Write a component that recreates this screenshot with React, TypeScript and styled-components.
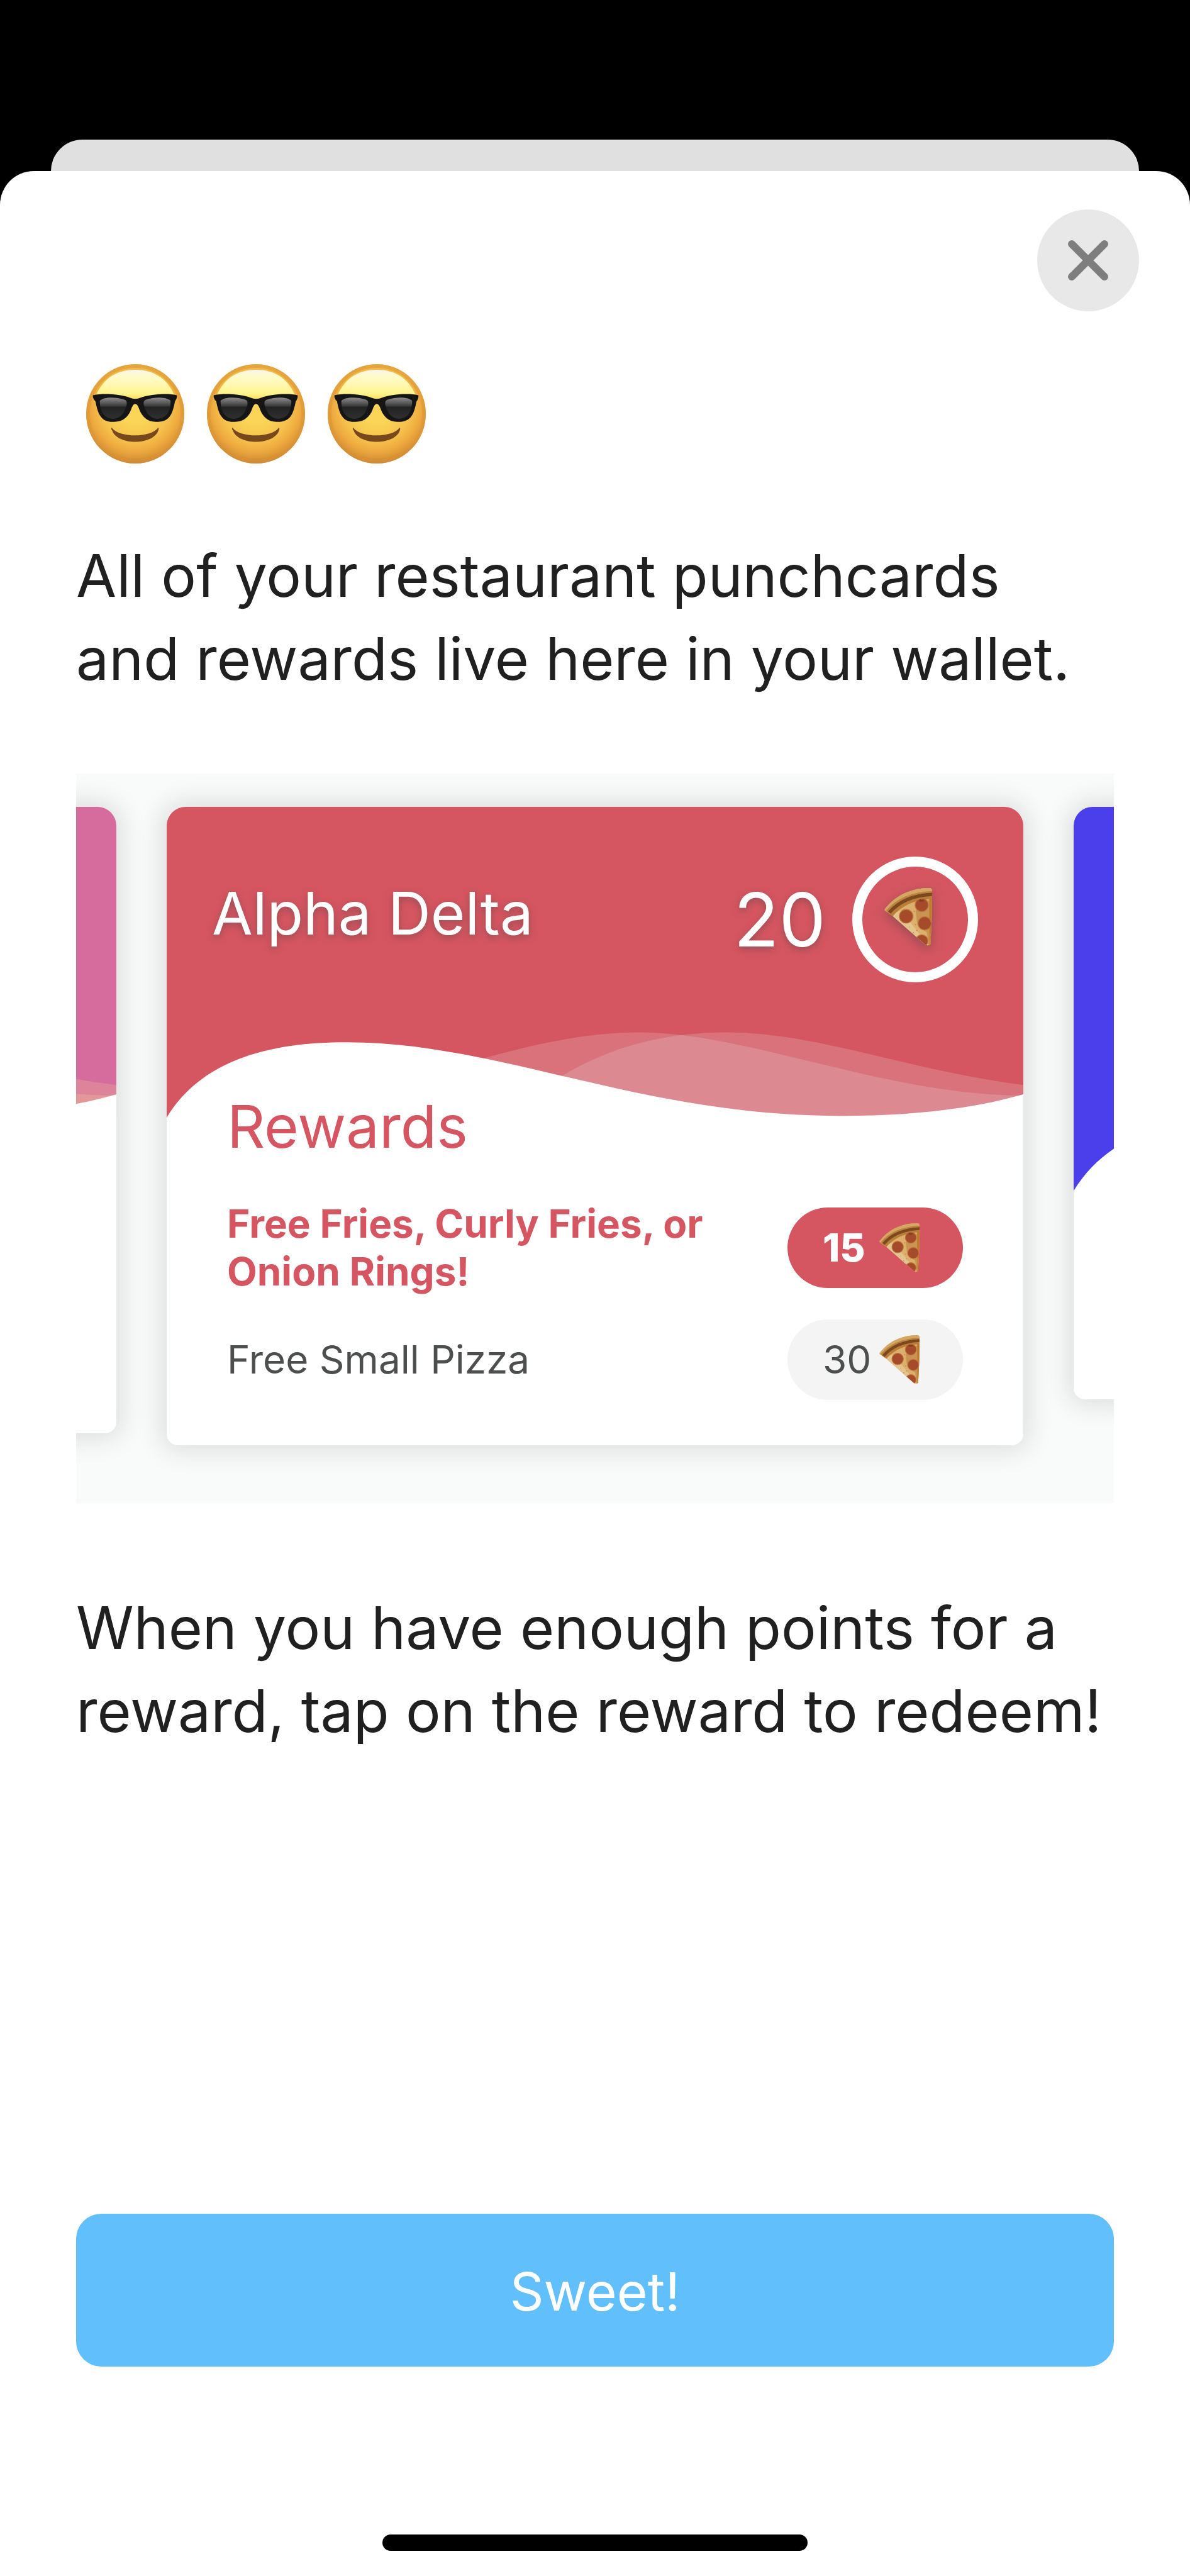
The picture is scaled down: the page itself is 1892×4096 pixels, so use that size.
import React, { useId } from "react";
import styled, { createGlobalStyle } from "styled-components";

const GlobalStyle = createGlobalStyle`
  *, *::before, *::after { box-sizing: border-box; }
  body {
    margin: 0;
    background: #000;
    font-family: Inter, "Liberation Sans", sans-serif;
    color: #202020;
  }
  p, h1, h2, ul { margin: 0; padding: 0; font-weight: 400; }
`;

const Screen = styled.div`
  display: flex;
  flex-direction: column;
  min-height: 100vh;
  padding-top: 222px;
  background: #000;
`;

const SheetBehind = styled.div`
  height: 50px;
  margin: 0 81px;
  border-radius: 50px 50px 0 0;
  background: #e0e0e0;
`;

const Sheet = styled.main`
  flex: 1;
  display: flex;
  flex-direction: column;
  padding-bottom: 40px;
  border-radius: 54px 54px 0 0;
  background: #fff;
`;

const TopBar = styled.div`
  display: flex;
  justify-content: flex-end;
  padding: 61px 81px 0;
`;

const CloseButton = styled.button`
  display: grid;
  place-items: center;
  width: 162px;
  height: 162px;
  padding: 0;
  border: 0;
  border-radius: 50%;
  background: #e8e8e8;
  color: #7e7e7e;
`;

const Content = styled.div`
  flex: 1;
  display: flex;
  flex-direction: column;
  padding: 84px 121px 0;
`;

const Faces = styled.div`
  display: flex;
  gap: 36px;
  padding-left: 16px;
`;

const Message = styled.p<{ $top: number }>`
  margin-top: ${(p) => p.$top}px;
  font-size: 93px;
  line-height: 132px;
`;

const Carousel = styled.section`
  display: flex;
  justify-content: center;
  align-items: flex-start;
  gap: 80px;
  margin-top: 117px;
  padding: 53px 0 92px;
  overflow: hidden;
  background: #f9fbfa;
`;

const Card = styled.article<{ $minHeight?: number }>`
  position: relative;
  flex: 0 0 calc(100% - 288px);
  min-height: ${(p) => p.$minHeight ?? 0}px;
  overflow: hidden;
  border-radius: 30px 30px 18px 18px;
  background: #fff;
  box-shadow: 0 0 40px 10px rgba(0, 0, 0, 0.11);
`;

const CardArt = styled.svg`
  position: absolute;
  top: 0;
  left: 0;
  display: block;
  width: 100%;
`;

const CardBody = styled.div`
  position: relative;
`;

const CardHeader = styled.header`
  display: flex;
  align-items: center;
  justify-content: space-between;
  padding: 79px 72px 174px;
  color: #fff;
  text-shadow: 0 4px 12px rgba(60, 60, 60, 0.4);
`;

const CardTitle = styled.h1`
  padding-bottom: 20px;
  font-size: 94px;
  line-height: 110px;
`;

const Points = styled.div`
  display: flex;
  align-items: center;
  gap: 42px;
  font-size: 118px;
  line-height: 140px;
`;

const Ring = styled.span`
  display: grid;
  place-items: center;
  width: 200px;
  height: 200px;
  padding: 0 22px 8px 0;
  border: 16px solid #fff;
  border-radius: 50%;
  svg { filter: drop-shadow(0 6px 9px rgba(60, 60, 60, 0.4)); }
`;

const Rewards = styled.div`
  padding: 0 96px 72px;
`;

const RewardsTitle = styled.h2`
  color: #d55661;
  font-size: 94px;
  line-height: 110px;
`;

const RewardList = styled.ul`
  display: grid;
  gap: 38px;
  margin-top: 62px;
  list-style: none;
`;

const Reward = styled.li<{ $ready?: boolean }>`
  display: flex;
  align-items: center;
  justify-content: space-between;
  color: ${(p) => (p.$ready ? "#d55661" : "#4d4f4f")};
  font-size: 62px;
  font-weight: ${(p) => (p.$ready ? 650 : 400)};
  line-height: 76px;
`;

const RewardName = styled.span`
  max-width: 800px;
`;

const Cost = styled.button<{ $ready?: boolean }>`
  display: flex;
  align-items: center;
  width: 279px;
  height: 128px;
  padding: 0 0 0 56px;
  border: 0;
  border-radius: 64px;
  background: ${(p) => (p.$ready ? "#d55661" : "#f4f4f4")};
  color: ${(p) => (p.$ready ? "#fff" : "#4d4f4f")};
  font: inherit;
  font-weight: ${(p) => (p.$ready ? 800 : 400)};
`;

const CostNumber = styled.span`
  width: 90px;
  text-align: left;
`;

const PrimaryButton = styled.button`
  flex: none;
  height: 243px;
  margin-top: auto;
  padding: 4px 0 0;
  border: 0;
  border-radius: 40px;
  background: #61bffb;
  color: #fff;
  font-family: inherit;
  font-size: 84px;
  line-height: 100px;
`;

const HomeIndicator = styled.div`
  flex: none;
  align-self: center;
  width: 676px;
  height: 26px;
  margin-top: 267px;
  border-radius: 13px;
  background: #000;
`;

function CloseIcon() {
  return (
    <svg width="64" height="64" viewBox="0 0 64 64" aria-hidden="true">
      <path d="M6 6L58 58M58 6L6 58" stroke="currentColor" strokeWidth="12" strokeLinecap="round" />
    </svg>
  );
}

function CoolFace() {
  const id = useId();
  return (
    <svg width="156" height="158" viewBox="0 0 158 160" aria-hidden="true">
      <defs>
        <radialGradient id={id + "f"} cx="0.5" cy="0.42" r="0.58">
          <stop offset="0.3" stopColor="#fad557" />
          <stop offset="0.6" stopColor="#f6c24c" />
          <stop offset="0.78" stopColor="#efab40" />
          <stop offset="0.9" stopColor="#dd9837" />
          <stop offset="1" stopColor="#c07a33" />
        </radialGradient>
        <linearGradient id={id + "h"} x1="0" y1="0" x2="0" y2="1">
          <stop offset="0" stopColor="#f4f4f6" />
          <stop offset="0.16" stopColor="#fffbd0" />
          <stop offset="0.5" stopColor="#fff8b0" />
          <stop offset="0.8" stopColor="#fff38a" />
          <stop offset="1" stopColor="#fbd75a" />
        </linearGradient>
        <linearGradient id={id + "g"} x1="0" y1="0" x2="0" y2="1">
          <stop offset="0" stopColor="#8d8d8d" />
          <stop offset="0.4" stopColor="#3a3a3a" />
          <stop offset="0.45" stopColor="#222" />
          <stop offset="1" stopColor="#303030" />
        </linearGradient>
      </defs>
      <ellipse cx="79" cy="80" rx="79" ry="80" fill={`url(#${id}f)`} />
      <ellipse cx="79" cy="80" rx="76" ry="77" fill="none" stroke="#dd9837" strokeWidth="6" strokeOpacity="0.55" />
      <path d="M16 50C28 22 50 9 79 9C108 9 130 22 142 50C120 48 96 50 79 58C62 50 38 48 16 50Z" fill={`url(#${id}h)`} />
      <path d="M11 50C30 46 58 49 70 54Q79 58 88 54C100 49 128 46 146 50Q147 55 143 60C141 70 139 79 134 85C128 92 120 93 112 93C98 93 90 84 86 74C84 68 82 64 79 64C76 64 74 68 72 74C68 84 60 93 45 93C37 93 29 92 24 85C19 79 17 70 15 60Q10 55 11 50Z" fill="#151515" />
      <path d="M22 59C27 53 46 52 61 57Q67 59 65 66C62 78 56 87 44 88C30 88 22 78 22 59Z" fill={`url(#${id}g)`} />
      <path d="M136 59C131 53 112 52 97 57Q91 59 93 66C96 78 102 87 114 88C128 88 136 78 136 59Z" fill={`url(#${id}g)`} />
      <path d="M41 102C52 119 105 119 116 102C117 103 117 105 116 107C108 131 50 131 42 107C40 105 40 103 41 102Z" fill="#77481c" />
    </svg>
  );
}

function PizzaIcon({ size }: { size: number }) {
  const id = useId();
  return (
    <svg width={size} viewBox="0 0 230 277" aria-hidden="true">
      <defs>
        <clipPath id={id}>
          <path d="M0 105C50 36 130 0 215 0Q230 0 230 14L228 150L222 270Q220 278 206 276Q196 274 186 263L35 130Q24 126 0 105Z" />
        </clipPath>
      </defs>
      <g clipPath={`url(#${id})`}>
        <rect width="230" height="277" fill="#dcb06c" />
        <path d="M25 125L195 277H215L120 160L80 110Z" fill="#e4c48e" />
        <path d="M150 110L185 60H230V277H212L205 215L160 180Z" fill="#c99450" />
        <path d="M216 50H230V277H218Z" fill="#bf7b2c" />
        <path d="M26 126C76 66 146 38 232 34" fill="none" stroke="#bb7d38" strokeWidth="34" />
        <path d="M24 118C74 60 146 34 232 30" fill="none" stroke="#7a4a1e" strokeWidth="17" />
        <path d="M0 112C50 44 130 10 232 8" fill="none" stroke="#d5a762" strokeWidth="22" />
        <path d="M11 112C62 50 138 22 232 18" fill="none" stroke="#b98142" strokeWidth="8" />
        <g fill="#a54b2c" stroke="#c1773c" strokeWidth="4">
          <circle cx="105" cy="136" r="33" />
          <circle cx="180" cy="82" r="32" />
          <circle cx="194" cy="170" r="32" />
          <circle cx="180" cy="255" r="30" />
        </g>
        <path d="M172 52l8 8 8-6 2 10-22 2z" fill="#7a3f1c" />
        <g fill="#bf8440">
          <circle cx="150" cy="176" r="3" />
          <circle cx="140" cy="215" r="3" />
          <circle cx="122" cy="188" r="2" />
          <circle cx="156" cy="204" r="3" />
          <circle cx="144" cy="112" r="3" />
          <circle cx="222" cy="225" r="5" />
        </g>
      </g>
    </svg>
  );
}

/* Coloured top of a card with its two translucent waves and the white one in front. */
function Wave({ color, tint = "#f0ffff", drop = 0 }: { color: string; tint?: string; drop?: number }) {
  return (
    <CardArt viewBox={`0 0 1383 ${520 + drop}`} aria-hidden="true">
      <rect width="1383" height={503 + drop} fill={color} />
      <g transform={`translate(0 ${drop})`}>
        <path d="M400 440C508 406 640 364 762 364C940 364 1160 466 1383 466V520H400Z" fill={tint} fillOpacity="0.17" />
        <path d="M600 460C690 394 790 364 904 364C1050 364 1190 424 1383 449V520H600Z" fill={tint} fillOpacity="0.17" />
        <path d="M0 502C54 412 160 380 290 380C540 380 760 499 1092 499C1200 499 1300 488 1383 464V522H0Z" fill="#fff" />
      </g>
    </CardArt>
  );
}

const rewards = [
  { name: "Free Fries, Curly Fries, or Onion Rings!", cost: 15, ready: true },
  { name: "Free Small Pizza", cost: 30, ready: false },
];

export default function App() {
  return (
    <>
      <GlobalStyle />
      <Screen>
        <SheetBehind />
        <Sheet>
          <TopBar>
            <CloseButton type="button" aria-label="Close">
              <CloseIcon />
            </CloseButton>
          </TopBar>
          <Content>
            <Faces>
              {[0, 1, 2].map((n) => (
                <CoolFace key={n} />
              ))}
            </Faces>
            <Message $top={112}>
              All of your restaurant punchcards
              <br />
              and rewards live here in your wallet.
            </Message>
            <Carousel>
              <Card $minHeight={996}>
                <Wave color="#d66b9d" tint="#ffff90" />
              </Card>
              <Card>
                <Wave color="#d55661" />
                <CardBody>
                  <CardHeader>
                    <CardTitle>Alpha Delta</CardTitle>
                    <Points>
                      20
                      <Ring>
                        <PizzaIcon size={76} />
                      </Ring>
                    </Points>
                  </CardHeader>
                  <Rewards>
                    <RewardsTitle>Rewards</RewardsTitle>
                    <RewardList>
                      {rewards.map((r) => (
                        <Reward key={r.name} $ready={r.ready}>
                          <RewardName>{r.name}</RewardName>
                          <Cost type="button" $ready={r.ready}>
                            <CostNumber>{r.cost}</CostNumber>
                            <PizzaIcon size={64} />
                          </Cost>
                        </Reward>
                      ))}
                    </RewardList>
                  </Rewards>
                </CardBody>
              </Card>
              <Card $minHeight={942}>
                <Wave color="#4b3feb" drop={118} />
              </Card>
            </Carousel>
            <Message $top={132}>
              When you have enough points for a
              <br />
              reward, tap on the reward to redeem!
            </Message>
            <PrimaryButton type="button">Sweet!</PrimaryButton>
          </Content>
          <HomeIndicator />
        </Sheet>
      </Screen>
    </>
  );
}
